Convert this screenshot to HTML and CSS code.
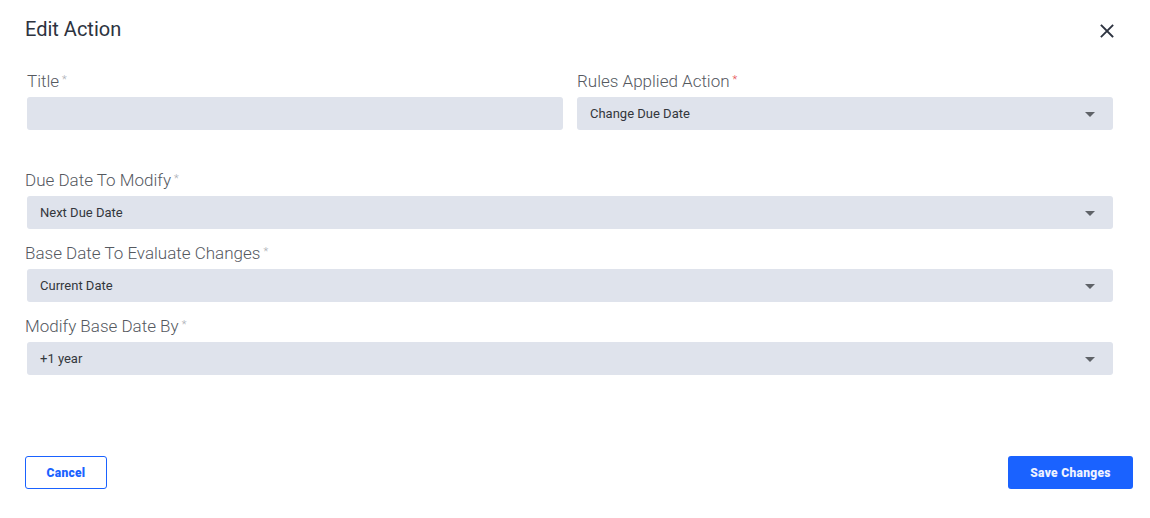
FILE: index.html
```html
<!DOCTYPE html>
<html lang="en">
<head>
<meta charset="UTF-8">
<meta name="viewport" content="width=device-width, initial-scale=1.0">
<title>Edit Action</title>
<link rel="stylesheet" href="styles.css">
</head>
<body>

<div class="modal">
    <div class="modal-header">
        <h1 class="modal-title">Edit Action</h1>
        <button class="close-btn" aria-label="Close">
            <svg width="14" height="14" viewBox="0 0 14 14">
                <path d="M1.5 1.5 L12.5 12.5 M12.5 1.5 L1.5 12.5" stroke="#2d3340" stroke-width="1.8" stroke-linecap="square"/>
            </svg>
        </button>
    </div>

    <div class="modal-body">
        <div class="row">
            <div class="field">
                <label class="label">Title<span class="req">*</span></label>
                <div class="input"></div>
            </div>
            <div class="field">
                <label class="label">Rules Applied Action<span class="req req-red">*</span></label>
                <div class="select">Change Due Date<span class="caret"></span></div>
            </div>
        </div>

        <div class="field">
            <label class="label label-wide">Due Date To Modify<span class="req">*</span></label>
            <div class="select">Next Due Date<span class="caret"></span></div>
        </div>

        <div class="field">
            <label class="label label-wide">Base Date To Evaluate Changes<span class="req">*</span></label>
            <div class="select">Current Date<span class="caret"></span></div>
        </div>

        <div class="field">
            <label class="label label-wide">Modify Base Date By<span class="req">*</span></label>
            <div class="select">+1 year<span class="caret"></span></div>
        </div>
    </div>

    <div class="modal-footer">
        <button class="btn btn-outline">Cancel</button>
        <button class="btn btn-primary">Save Changes</button>
    </div>
</div>

</body>
</html>
```

FILE: styles.css
```css
body {
    font-family: Roboto, "Liberation Sans", sans-serif;
    background-color: #ffffff;
    margin: 0;
    padding: 0;
}

.modal {
    width: 1150px;
    height: 518px;
    display: flex;
    flex-direction: column;
}

.modal-header {
    display: flex;
    align-items: center;
    justify-content: space-between;
    padding: 15px 36px 0 25px;
    height: 28px;
}

.modal-title {
    margin: 0;
    font-size: 20px;
    font-weight: 400;
    color: #2d3340;
    line-height: 28px;
}

.close-btn {
    background: none;
    border: none;
    padding: 0;
    width: 14px;
    height: 14px;
    cursor: pointer;
    margin-top: 3px;
}

.close-btn svg {
    display: block;
}

.modal-body {
    padding: 30px 37px 0 27px;
    display: flex;
    flex-direction: column;
    gap: 16px;
}

.row {
    display: flex;
    gap: 14px;
    margin-bottom: 26px;
}

.row .field {
    flex: 1;
}

.field {
    display: flex;
    flex-direction: column;
}

.label {
    display: block;
    height: 17px;
    font-size: 17px;
    font-weight: 300;
    color: #55595f;
    line-height: 17px;
    margin-bottom: 7px;
}

.label-wide {
    margin-left: -2px;
}

.req {
    font-size: 11px;
    line-height: 0;
    color: #a9adb3;
    margin-left: 3px;
    vertical-align: 4px;
}

.req-red {
    color: #e5484d;
}

.input,
.select {
    height: 33px;
    background-color: #dfe3ec;
    border-radius: 3px;
    box-sizing: border-box;
}

.select {
    position: relative;
    padding-left: 13px;
    font-size: 13px;
    color: #33373c;
    line-height: 33px;
}

.caret {
    position: absolute;
    right: 18px;
    top: 15px;
    width: 0;
    height: 0;
    border-left: 5px solid transparent;
    border-right: 5px solid transparent;
    border-top: 5px solid #5f6368;
}

.modal-footer {
    margin-top: auto;
    display: flex;
    justify-content: space-between;
    padding: 0 17px 29px 25px;
}

.btn {
    height: 33px;
    font-family: Roboto, "Liberation Sans", sans-serif;
    font-size: 12px;
    font-weight: 900;
    letter-spacing: 0.3px;
    border-radius: 3px;
    cursor: pointer;
    box-sizing: border-box;
}

.btn-outline {
    width: 82px;
    background: #ffffff;
    color: #1a62ff;
    border: 1px solid #1a62ff;
}

.btn-primary {
    width: 125px;
    background: #1a62ff;
    color: #eef2ff;
    border: none;
}
```
